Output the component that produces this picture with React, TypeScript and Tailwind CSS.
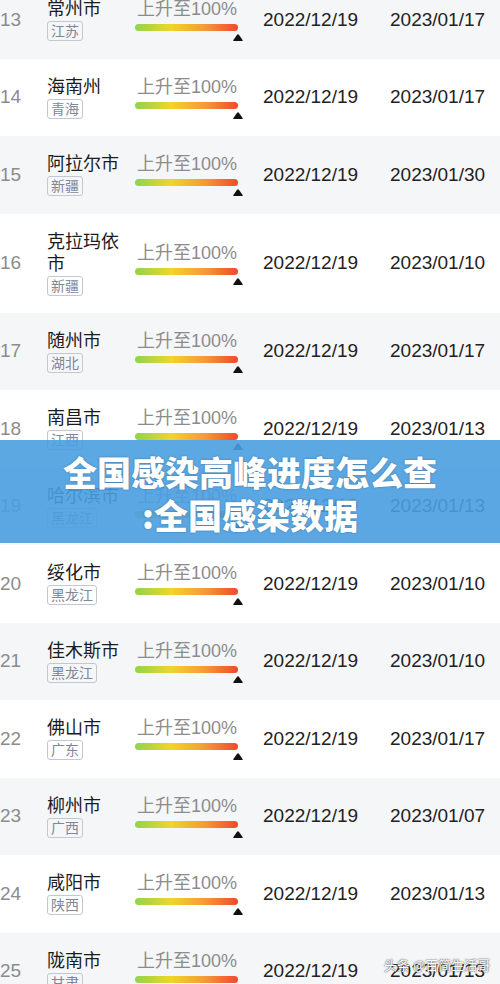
const rows = [
  { rank: 13, city: "常州市", prov: "江苏", end: "2023/01/17" },
  { rank: 14, city: "海南州", prov: "青海", end: "2023/01/17" },
  { rank: 15, city: "阿拉尔市", prov: "新疆", end: "2023/01/30" },
  { rank: 16, city: "克拉玛依市", prov: "新疆", end: "2023/01/10" },
  { rank: 17, city: "随州市", prov: "湖北", end: "2023/01/17" },
  { rank: 18, city: "南昌市", prov: "江西", end: "2023/01/13" },
  { rank: 19, city: "哈尔滨市", prov: "黑龙江", end: "2023/01/13" },
  { rank: 20, city: "绥化市", prov: "黑龙江", end: "2023/01/10" },
  { rank: 21, city: "佳木斯市", prov: "黑龙江", end: "2023/01/10" },
  { rank: 22, city: "佛山市", prov: "广东", end: "2023/01/17" },
  { rank: 23, city: "柳州市", prov: "广西", end: "2023/01/07" },
  { rank: 24, city: "咸阳市", prov: "陕西", end: "2023/01/13" },
  { rank: 25, city: "陇南市", prov: "甘肃", end: "2023/01/13" },
];

function Marker() {
  return (
    <svg width="10" height="7" viewBox="0 0 10 7" className="block">
      <path d="M4.1 0.8 Q5 -0.3 5.9 0.8 L9.6 6 Q10 7 9 7 L1 7 Q0 7 0.4 6 Z" fill="#111" />
    </svg>
  );
}

function Row({ r, gray }: { r: (typeof rows)[number]; gray: boolean }) {
  const tall = r.city.length > 4;
  return (
    <div
      className={`flex items-center ${tall ? "h-[99px]" : "h-[77.5px]"} ${
        gray ? "bg-[#f5f6f8]" : "bg-white"
      }`}
    >
      {/* rank */}
      <div className="w-[47px] shrink-0 text-[19px] text-[#8c8c8c]">{r.rank}</div>

      {/* city + province */}
      <div className="w-[88px] shrink-0 pr-[10px]">
        <div className="text-[18px] leading-[22px] text-[#1c1c1c]">{r.city}</div>
        <div className="mt-[1px] flex">
          <span className="h-[20px] rounded-[3px] border border-[#c3c7cf] px-[3px] text-[14px] leading-[18px] text-[#7f8799]">
            {r.prov}
          </span>
        </div>
      </div>

      {/* progress */}
      <div className="w-[128px] shrink-0">
        <div className="pl-[2px] text-[18px] leading-[22px] text-[#8c8c8c]">上升至100%</div>
        <div className="mt-[4px] h-[7px] w-[103px] rounded-full bg-[linear-gradient(90deg,#8fd44c_0%,#f0d52a_35%,#f59a36_68%,#ee4a2c_100%)]" />
        <div className="mt-[3px] flex w-[108px] justify-end">
          <Marker />
        </div>
      </div>

      {/* dates */}
      <div className="w-[127px] shrink-0 text-[19px] text-[#222]">2022/12/19</div>
      <div className="flex-1 text-[19px] text-[#222]">{r.end}</div>
    </div>
  );
}

export default function App() {
  return (
    <div
      className="relative h-[984px] w-[500px] overflow-hidden bg-white"
      style={{ fontFamily: '"Liberation Sans", "Noto Sans CJK SC", sans-serif' }}
    >
      <div className="-mt-[19px]">
        {rows.map((r, i) => (
          <Row key={r.rank} r={r} gray={i % 2 === 0} />
        ))}
      </div>

      {/* title banner */}
      <div className="absolute left-0 right-0 top-[440px] flex h-[103px] flex-col items-center justify-center bg-[#4a9fe0]/[0.9] pt-[3px]">
        <div className="text-[34px] font-black leading-[43px] text-white [font-family:'Noto_Sans_CJK_SC',sans-serif] [text-shadow:0_0_2px_rgba(0,0,0,0.35)]">
          全国感染高峰进度怎么查
        </div>
        <div className="text-[34px] font-black leading-[43px] text-white [font-family:'Noto_Sans_CJK_SC',sans-serif] [text-shadow:0_0_2px_rgba(0,0,0,0.35)]">
          :全国感染数据
        </div>
      </div>

      {/* watermark */}
      <div className="absolute left-[384px] top-[955px] text-[13px] text-white [font-family:'Noto_Sans_CJK_SC',sans-serif] [text-shadow:0_0_1px_#444,0_0_2px_#666]">
        头条 @百简生活哥
      </div>
    </div>
  );
}
